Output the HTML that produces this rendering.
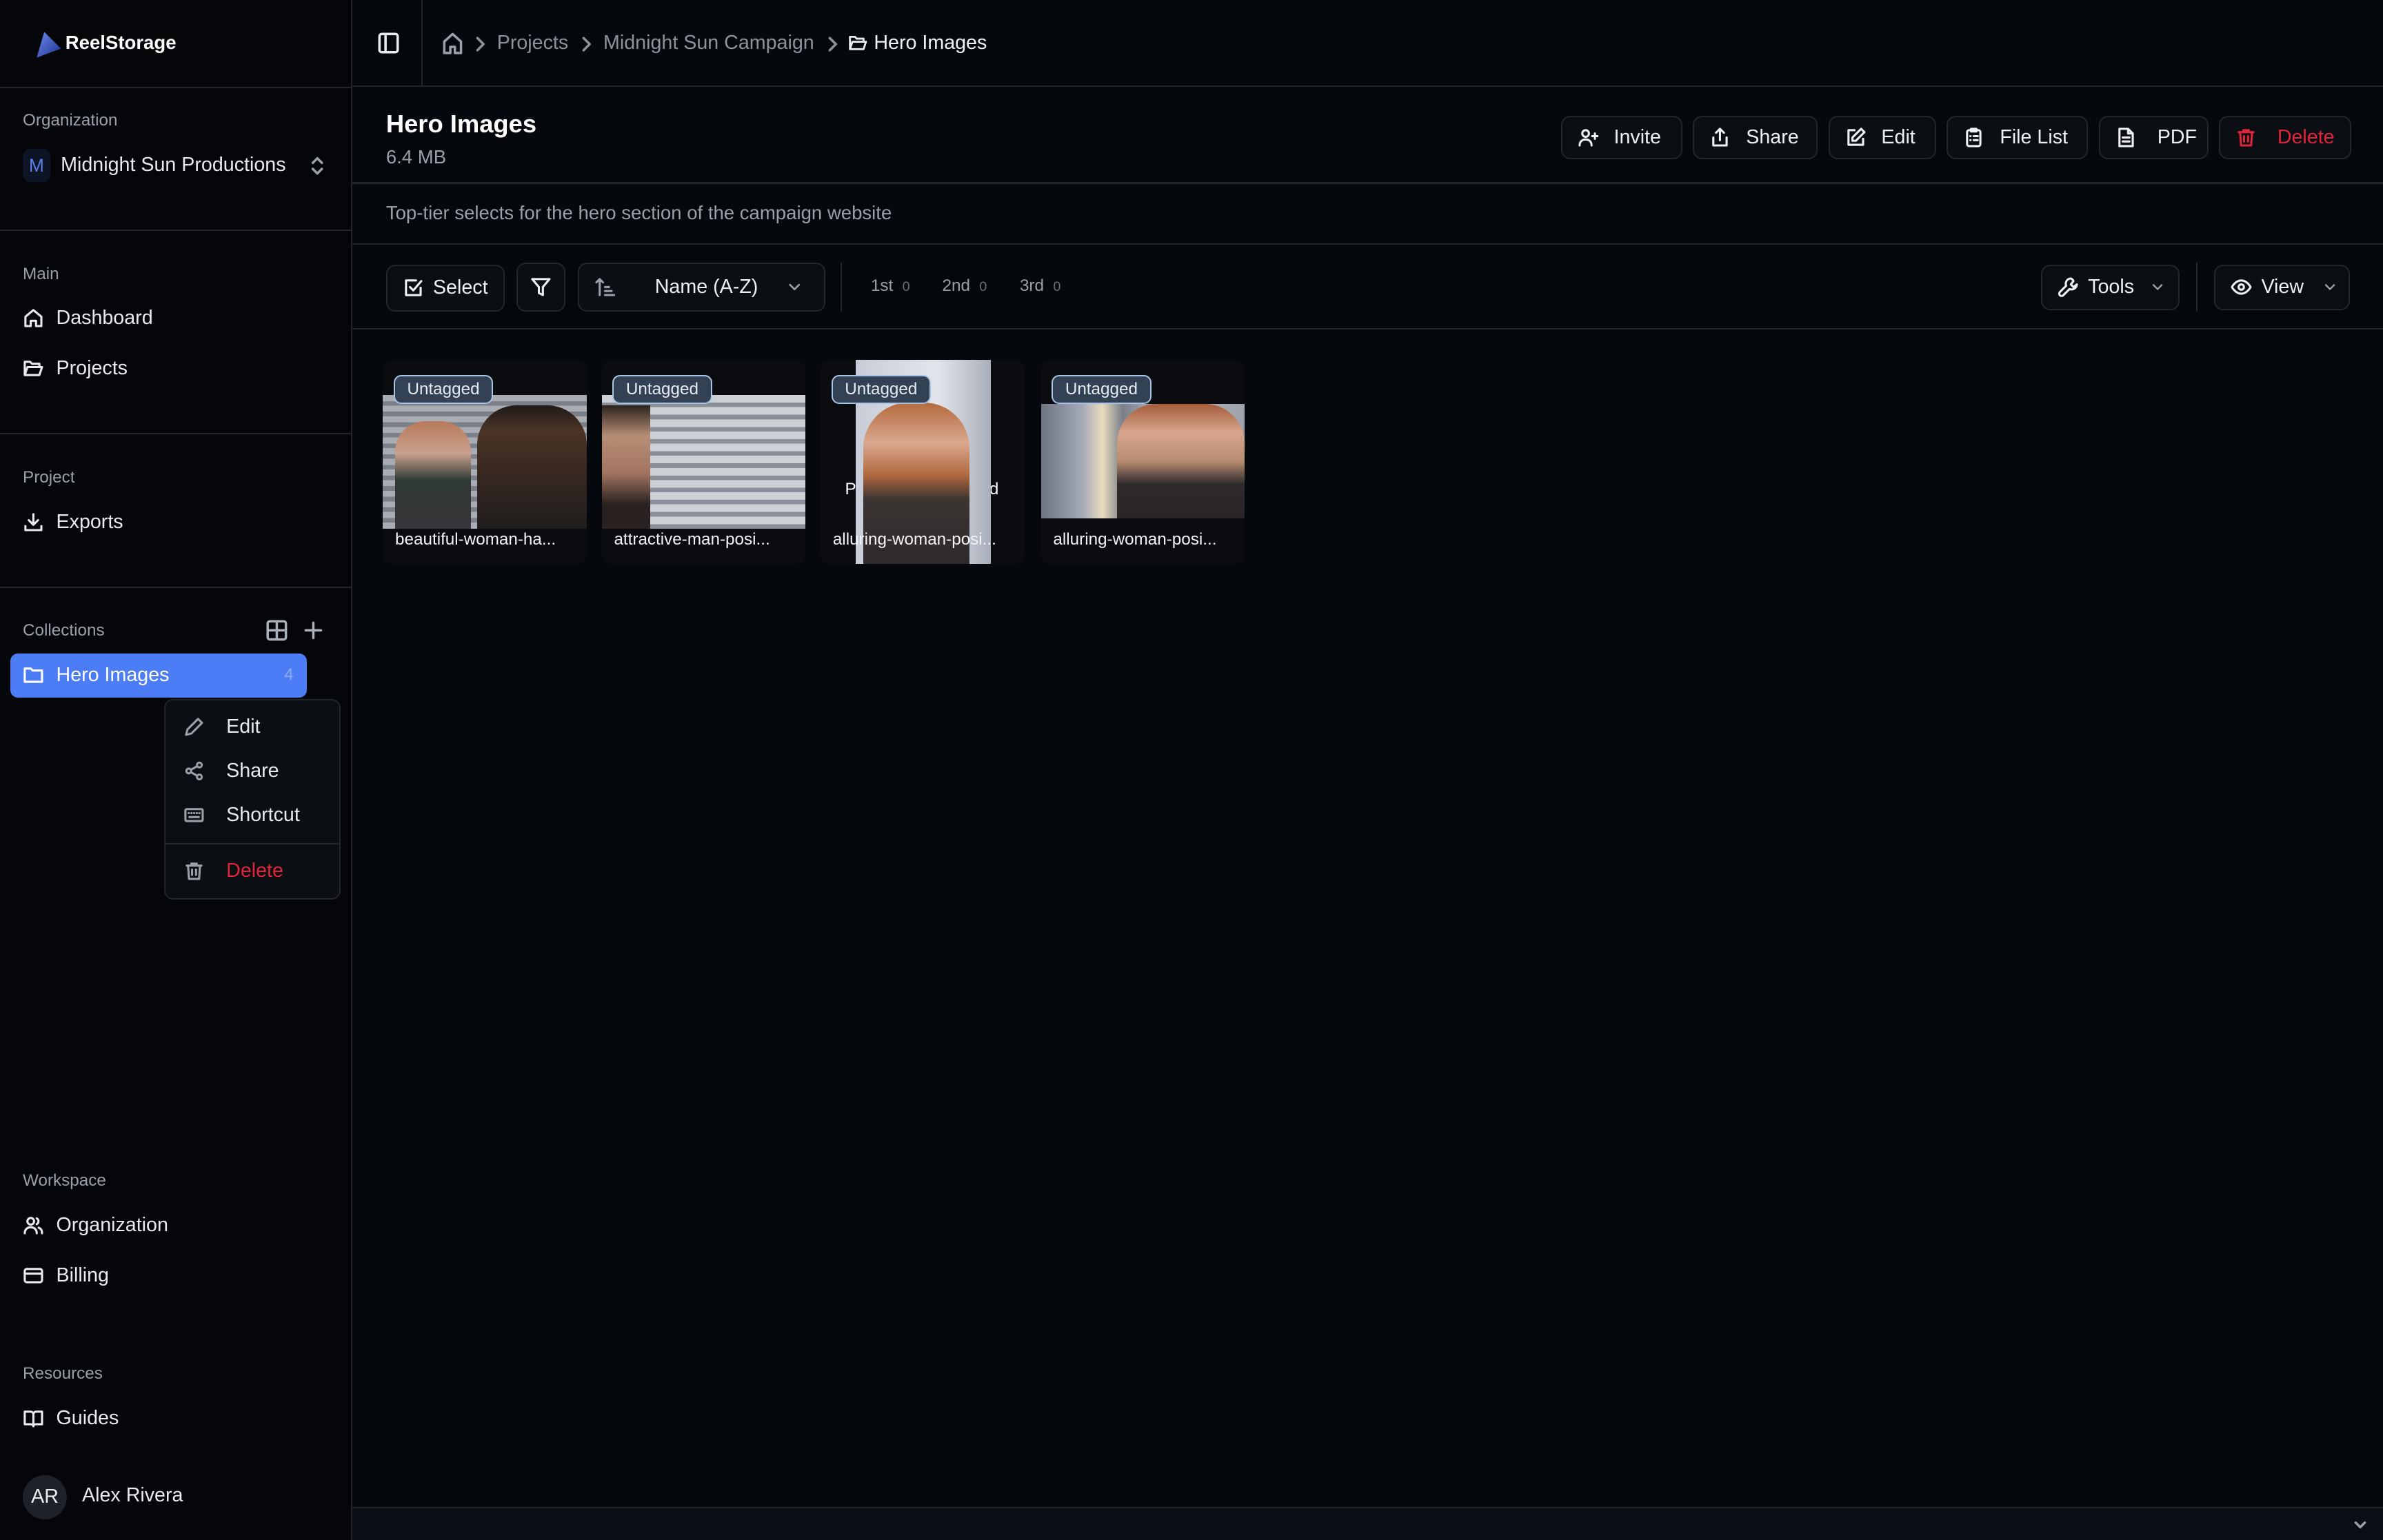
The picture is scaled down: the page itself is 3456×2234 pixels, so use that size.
<!DOCTYPE html>
<html><head><meta charset="utf-8">
<style>
*{box-sizing:border-box;margin:0;padding:0}
html,body{width:3456px;height:2234px;overflow:hidden;background:#05080c}
#w{width:1568px;height:1014px;zoom:2.20408;position:relative;font-family:"Liberation Sans",Arial,sans-serif;color:#e8eaee;background:#05080c;overflow:hidden}
.a{position:absolute}
svg{fill:none;stroke:currentColor;stroke-width:1.6;stroke-linecap:round;stroke-linejoin:round;flex-shrink:0}
.side{left:0;top:0;width:232px;height:1014px;background:#04060a;border-right:1px solid #1f242b}
.hl{position:absolute;left:0;width:232px;height:1px;background:#22272e}
.lbl{position:absolute;left:15px;font-size:11px;color:#9aa0a8}
.it{position:absolute;left:15px;font-size:13px;color:#e8eaee;display:flex;align-items:center;gap:8px;white-space:nowrap}
.it svg{width:14px;height:14px}
.btn{position:absolute;height:29px;border:1px solid #22272e;border-radius:6px;background:#0b0e13;display:flex;align-items:center;gap:10px;padding:0 10px;font-size:13px;color:#eef0f3;white-space:nowrap}
.btn svg{width:14px;height:14px}
.card{position:absolute;top:237px;width:134px;height:134px;background:#0a0c10;border-radius:6px;overflow:hidden}
.tag{position:absolute;top:10px;left:7px;height:19px;padding:0 8px;background:#334155;border:1px solid #a9c4e6;border-radius:5px;font-size:11px;color:#e5eaf0;line-height:17px}
.nm{position:absolute;left:8px;top:112px;font-size:11px;color:#f2f3f5;white-space:nowrap}
.bc{position:absolute;top:21px;font-size:13px;color:#8d939b;white-space:nowrap}
</style></head><body><div id="w">

<div class="a side">
 <svg class="a" style="left:23px;top:20px;width:18px;height:18px;stroke:none" viewBox="0 0 18 18"><defs><linearGradient id="g" x1="0" y1="0" x2="1" y2="1"><stop offset="0" stop-color="#6b8cf0"/><stop offset="1" stop-color="#1e2f8a"/></linearGradient></defs><path d="M6 1 L17 12 L1 18 Z" fill="url(#g)"/></svg>
 <div class="a" style="left:43px;top:21px;font-size:12.5px;font-weight:bold;color:#fff">ReelStorage</div>
 <div class="hl" style="top:57px"></div>
 <div class="lbl" style="top:73px">Organization</div>
 <div class="a" style="left:15px;top:98px;width:18px;height:22px;border-radius:5px;background:#0c1426;color:#5b7fe8;font-size:12px;text-align:center;line-height:22px">M</div>
 <div class="a" style="left:40px;top:101px;font-size:13px">Midnight Sun Productions</div>
 <svg class="a" style="left:203px;top:101px;width:12px;height:16px;color:#9aa0a8" viewBox="0 0 12 16"><path d="M3 6l3-3 3 3M3 10l3 3 3-3"/></svg>
 <div class="hl" style="top:151px"></div>
 <div class="lbl" style="top:174px">Main</div>
 <div class="it" style="top:202px"><svg viewBox="0 0 16 16"><path d="M2 7l6-5 6 5v7H10v-4H6v4H2z"/></svg>Dashboard</div>
 <div class="it" style="top:235px"><svg viewBox="0 0 16 16"><path d="M1.5 13V3h4l1.5 1.5h5.5V7M1.5 13l2-6h11l-2 6z"/></svg>Projects</div>
 <div class="hl" style="top:285px"></div>
 <div class="lbl" style="top:308px">Project</div>
 <div class="it" style="top:336px"><svg viewBox="0 0 16 16"><path d="M8 2v8M4.5 6.5L8 10l3.5-3.5M2 11v3h12v-3"/></svg>Exports</div>
 <div class="hl" style="top:386px"></div>
 <div class="lbl" style="top:409px">Collections</div>
 <svg class="a" style="left:175px;top:408px;width:14px;height:14px;color:#aab0b8" viewBox="0 0 14 14"><rect x="1" y="1" width="12" height="12" rx="1.5"/><path d="M7 1v12M1 7h12"/></svg>
 <svg class="a" style="left:199px;top:408px;width:14px;height:14px;color:#aab0b8" viewBox="0 0 14 14"><path d="M7 2v10M2 7h10"/></svg>
 <div class="a" style="left:7px;top:430px;width:195px;height:29px;background:#4c7df7;border-radius:5px"></div>
 <div class="it" style="top:437px;color:#fff"><svg viewBox="0 0 16 16"><path d="M1.5 3h4.5l1.5 1.5h7V13h-13z"/></svg>Hero Images</div>
 <div class="a" style="left:187px;top:438px;font-size:11px;color:#8ea9f0">4</div>
 <div class="lbl" style="top:771px">Workspace</div>
 <div class="it" style="top:799px"><svg viewBox="0 0 16 16"><circle cx="6" cy="5" r="2.5"/><path d="M1.5 14c0-3 2-4.5 4.5-4.5S10.5 11 10.5 14M10.5 2.8a2.5 2.5 0 010 4.4M12 9.8c1.6.6 2.5 2 2.5 4.2"/></svg>Organization</div>
 <div class="it" style="top:832px"><svg viewBox="0 0 16 16"><rect x="1.5" y="3" width="13" height="10" rx="1.5"/><path d="M1.5 6.5h13"/></svg>Billing</div>
 <div class="lbl" style="top:898px">Resources</div>
 <div class="it" style="top:926px"><svg viewBox="0 0 16 16"><path d="M1.5 3h4.5c1 0 2 .8 2 2v9c0-1-1-1.5-2-1.5H1.5zM14.5 3H10c-1 0-2 .8-2 2v9c0-1 1-1.5 2-1.5h4.5z"/></svg>Guides</div>
 <div class="a" style="left:15px;top:971px;width:29px;height:29px;border-radius:50%;background:#1d2128;font-size:13px;text-align:center;line-height:29px;color:#e8eaee">AR</div>
 <div class="a" style="left:54px;top:977px;font-size:13px">Alex Rivera</div>
</div>

<div class="a" style="left:108px;top:460px;width:116px;height:132px;background:#0b0e13;border:1px solid #22272e;border-radius:6px">
 <div class="it" style="left:12px;top:10px"><svg viewBox="0 0 16 16" style="color:#9aa0a8"><path d="M11 2l3 3-8 8-4 1 1-4z"/></svg><span style="margin-left:6px">Edit</span></div>
 <div class="it" style="left:12px;top:39px"><svg viewBox="0 0 16 16" style="color:#9aa0a8"><circle cx="12" cy="3.5" r="1.8"/><circle cx="4" cy="8" r="1.8"/><circle cx="12" cy="12.5" r="1.8"/><path d="M5.6 7.1l4.8-2.7M5.6 8.9l4.8 2.7"/></svg><span style="margin-left:6px">Share</span></div>
 <div class="it" style="left:12px;top:68px"><svg viewBox="0 0 16 16" style="color:#9aa0a8"><rect x="1.5" y="3.5" width="13" height="9" rx="1"/><path d="M4 6.5h.1M6 6.5h.1M8 6.5h.1M10 6.5h.1M12 6.5h.1M4.5 9.5h7"/></svg><span style="margin-left:6px">Shortcut</span></div>
 <div style="position:absolute;left:0;top:94px;width:114px;height:1px;background:#22272e"></div>
 <div class="it" style="left:12px;top:105px;color:#e0243a"><svg viewBox="0 0 16 16" style="color:#9aa0a8"><path d="M2.5 4h11M6 4V2.5h4V4M3.5 4l.7 10h7.6l.7-10M6.5 7v4M9.5 7v4"/></svg><span style="margin-left:6px">Delete</span></div>
</div>

<!-- top bar -->
<div class="a" style="left:232px;top:0;width:1336px;height:57px;border-bottom:1px solid #22272e"></div>
<div class="a" style="left:277px;top:0;width:1px;height:57px;background:#22272e"></div>
<svg class="a" style="left:248px;top:21px;width:15px;height:15px;color:#e8eaee" viewBox="0 0 15 15"><rect x="1.5" y="1.5" width="12" height="12" rx="1.5"/><path d="M5.5 1.5v12"/></svg>
<svg class="a" style="left:291px;top:21px;width:14px;height:15px;color:#9aa0a8" viewBox="0 0 14 15"><path d="M1.5 6.5L7 1.5l5.5 5V14h-4v-4h-3v4h-4z"/></svg>
<svg class="a" style="left:312px;top:24px;width:8px;height:10px;color:#8d939b" viewBox="0 0 8 10"><path d="M2 1l4 4-4 4"/></svg>
<div class="bc" style="left:327px">Projects</div>
<svg class="a" style="left:382px;top:24px;width:8px;height:10px;color:#8d939b" viewBox="0 0 8 10"><path d="M2 1l4 4-4 4"/></svg>
<div class="bc" style="left:397px">Midnight Sun Campaign</div>
<svg class="a" style="left:544px;top:24px;width:8px;height:10px;color:#8d939b" viewBox="0 0 8 10"><path d="M2 1l4 4-4 4"/></svg>
<svg class="a" style="left:558px;top:22px;width:13px;height:13px;color:#e8eaee" viewBox="0 0 16 16"><path d="M1.5 13V3h4l1.5 1.5h5.5V7M1.5 13l2-6h11l-2 6z"/></svg>
<div class="bc" style="left:575px;color:#f2f3f5">Hero Images</div>

<!-- header -->
<div class="a" style="left:254px;top:72px;font-size:16.5px;font-weight:600;color:#fff">Hero Images</div>
<div class="a" style="left:254px;top:96px;font-size:12.5px;color:#9aa0a8">6.4 MB</div>
<div class="btn" style="left:1027px;top:76px;width:80px"><svg viewBox="0 0 16 16"><circle cx="6" cy="5" r="2.5"/><path d="M1.5 14c0-3 2-4.5 4.5-4.5s4.5 1.5 4.5 4.5M13 5v4M11 7h4"/></svg>Invite</div>
<div class="btn" style="left:1114px;top:76px;width:82px"><svg viewBox="0 0 16 16"><path d="M8 10V1.5M5 4.5l3-3 3 3M3 8v6h10V8"/></svg>Share</div>
<div class="btn" style="left:1203px;top:76px;width:71px"><svg viewBox="0 0 16 16"><path d="M7 2.5H2.5v11h11V9M12 1.5l2.5 2.5L8 10.5H5.5V8z"/></svg>Edit</div>
<div class="btn" style="left:1281px;top:76px;width:93px"><svg viewBox="0 0 16 16"><rect x="3" y="2.5" width="10" height="12" rx="1.5"/><path d="M6 1.5h4v2H6zM5.5 7h.1M8 7h3M5.5 10h.1M8 10h3"/></svg>File List</div>
<div class="btn" style="left:1381px;top:76px;width:72px"><svg viewBox="0 0 16 16"><path d="M3 1.5h6.5l3.5 3.5v9.5H3zM9.5 1.5V5H13M5.5 8h5M5.5 11h5"/></svg>&nbsp;PDF</div>
<div class="btn" style="left:1460px;top:76px;width:87px;color:#e0243a"><svg viewBox="0 0 16 16"><path d="M2.5 4h11M6 4V2.5h4V4M3.5 4l.7 10h7.6l.7-10M6.5 7v4M9.5 7v4"/></svg>&nbsp;Delete</div>
<div class="a" style="left:232px;top:120px;width:1336px;height:1px;background:#22272e"></div>
<div class="a" style="left:254px;top:133px;font-size:12.5px;color:#9aa0a8">Top-tier selects for the hero section of the campaign website</div>
<div class="a" style="left:232px;top:160px;width:1336px;height:1px;background:#22272e"></div>

<!-- toolbar -->
<div class="btn" style="left:254px;top:174px;width:78px;height:31px;gap:6px"><svg viewBox="0 0 16 16"><path d="M13.5 8v5.5h-11v-11H10M5.5 7.5L8 10l6-7"/></svg>Select</div>
<div class="btn" style="left:340px;top:173px;width:32px;height:32px;padding:0 8px"><svg viewBox="0 0 16 16"><path d="M1.5 2h13L9.5 8v6l-3-1.5V8z"/></svg></div>
<div class="btn" style="left:380px;top:173px;width:163px;height:32px;gap:0"><svg viewBox="0 0 16 16" style="color:#9aa0a8"><path d="M4 14V2M1.5 4.5L4 2l2.5 2.5M8 8h3M8 11h5M8 14h7"/></svg><span style="margin-left:26px">Name (A-Z)</span><svg viewBox="0 0 16 16" style="margin-left:18px;width:12px;color:#9aa0a8"><path d="M4 6l4 4 4-4"/></svg></div>
<div class="a" style="left:553px;top:173px;width:1px;height:32px;background:#22272e"></div>
<div class="a" style="left:573px;top:182px;font-size:11px;color:#9aa0a8">1st <span style="font-size:9px;color:#6b7079;margin-left:3px">0</span></div>
<div class="a" style="left:620px;top:182px;font-size:11px;color:#9aa0a8">2nd <span style="font-size:9px;color:#6b7079;margin-left:3px">0</span></div>
<div class="a" style="left:671px;top:182px;font-size:11px;color:#9aa0a8">3rd <span style="font-size:9px;color:#6b7079;margin-left:3px">0</span></div>
<div class="btn" style="left:1343px;top:174px;width:91px;height:30px;gap:6px"><svg viewBox="0 0 16 16"><path d="M10 1.5a4 4 0 00-3.5 5.5L1.8 11.7a1.5 1.5 0 002.5 2.5L9 9.5A4 4 0 0014.5 6l-2.5 2-2-2 2-2.5A4 4 0 0010 1.5z"/></svg>Tools<svg viewBox="0 0 16 16" style="width:11px;margin-left:4px;color:#9aa0a8"><path d="M4 6l4 4 4-4"/></svg></div>
<div class="a" style="left:1445px;top:173px;width:1px;height:32px;background:#22272e"></div>
<div class="btn" style="left:1457px;top:174px;width:89px;height:30px;gap:6px"><svg viewBox="0 0 16 16"><path d="M1 8s2.5-5 7-5 7 5 7 5-2.5 5-7 5-7-5-7-5z"/><circle cx="8" cy="8" r="2"/></svg>View<svg viewBox="0 0 16 16" style="width:11px;margin-left:6px;color:#9aa0a8"><path d="M4 6l4 4 4-4"/></svg></div>
<div class="a" style="left:232px;top:216px;width:1336px;height:1px;background:#22272e"></div>

<!-- cards -->
<div class="card" style="left:252px">
 <div class="a" style="left:0;top:23px;width:134px;height:88px;background:repeating-linear-gradient(180deg,#a9adb3 0 4px,#7b8088 4px 7px)"></div>
 <div class="a" style="left:8px;top:40px;width:50px;height:71px;background:linear-gradient(180deg,#b77a5a 0,#c9a08c 30%,#2e3a36 55%,#39343a 100%);border-radius:20px 20px 0 0"></div>
 <div class="a" style="left:62px;top:30px;width:72px;height:81px;background:linear-gradient(180deg,#1e1a18 0,#4a3426 20%,#3a2a20 50%,#1f1d1e 100%);border-radius:26px 26px 0 0"></div>
 <div class="tag">Untagged</div><div class="nm">beautiful-woman-ha...</div>
</div>
<div class="card" style="left:396px">
 <div class="a" style="left:0;top:23px;width:134px;height:88px;background:repeating-linear-gradient(180deg,#cdd0d5 0 5px,#8a8f97 5px 8px)"></div>
 <div class="a" style="left:0;top:30px;width:32px;height:81px;background:linear-gradient(180deg,#2a221e 0,#b78e76 25%,#a27460 55%,#2a2220 80%)"></div>
 <div class="tag">Untagged</div><div class="nm">attractive-man-posi...</div>
</div>
<div class="card" style="left:540px">
 <div class="a" style="left:16px;top:79px;font-size:11px;color:#fff">P</div>
 <div class="a" style="left:111px;top:79px;font-size:11px;color:#fff">d</div>
 <div class="a" style="left:23px;top:0;width:89px;height:134px;background:linear-gradient(90deg,#c8ccd6,#e2e5ec 60%,#a9aebb)"></div>
 <div class="a" style="left:28px;top:28px;width:70px;height:106px;background:linear-gradient(180deg,#b56a3e 0,#d9a88e 25%,#b0683e 45%,#3a3432 60%,#2e2a2c 100%);border-radius:30px 30px 0 0"></div>
 <div class="tag">Untagged</div><div class="nm">alluring-woman-posi...</div>
</div>
<div class="card" style="left:685px">
 <div class="a" style="left:0;top:29px;width:134px;height:75px;background:linear-gradient(90deg,#6e7482 0,#a3a9b6 20%,#e8dcc0 30%,#7a7f88 40%,#b8bcc4 60%,#9da2aa 100%)"></div>
 <div class="a" style="left:50px;top:29px;width:84px;height:75px;background:linear-gradient(180deg,#a65c3a 0,#d6a58c 25%,#b88c72 50%,#2e2a2c 70%,#2a2628 100%);border-radius:26px 26px 0 0"></div>
 <div class="tag">Untagged</div><div class="nm">alluring-woman-posi...</div>
</div>

<!-- bottom bar -->
<div class="a" style="left:232px;top:992px;width:1336px;height:22px;background:#0b0e15;border-top:1px solid #22272e"></div>
<svg class="a" style="left:1548px;top:998px;width:10px;height:10px;color:#9aa0a8" viewBox="0 0 10 10"><path d="M2 4l3 3 3-3"/></svg>

</div></body></html>
